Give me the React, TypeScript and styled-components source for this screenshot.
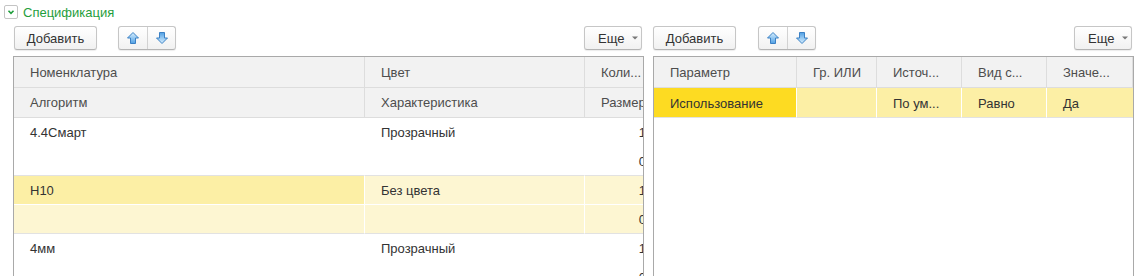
import React from 'react';
import styled, { createGlobalStyle } from 'styled-components';

const Global = createGlobalStyle`
  html, body { margin: 0; padding: 0; background: #fff; }
  body {
    font-family: Arial, "Liberation Sans", sans-serif;
    font-size: 13px;
    color: #333;
  }
  * { box-sizing: border-box; }
`;

const Page = styled.div`
  width: 1140px;
  height: 276px;
  overflow: hidden;
  padding-left: 4px;
`;

const GroupHeader = styled.div`
  display: flex;
  align-items: center;
  gap: 5px;
  height: 24px;
  margin-bottom: 2px;
`;

const CollapseBox = styled.div`
  width: 14px;
  height: 14px;
  border: 1px solid #c4c4c4;
  border-radius: 2px;
  display: flex;
  align-items: center;
  justify-content: center;
  background: #fff;
`;

const Title = styled.span`
  color: #1f9e3c;
  font-size: 13px;
`;

const Columns = styled.div`
  display: flex;
  gap: 9px;
  margin-left: 9px;
`;

const Panel = styled.div<{ $w: number }>`
  width: ${(p) => p.$w}px;
  display: flex;
  flex-direction: column;
  gap: 6px;
`;

const Toolbar = styled.div`
  display: flex;
  align-items: center;
  height: 24px;
`;

const Button = styled.button<{ $ml?: number; $mr?: number; $w?: number; $start?: boolean }>`
  height: 24px;
  ${(p) => (p.$w ? `width: ${p.$w}px;` : '')}
  margin-left: ${(p) => p.$ml ?? 0}px;
  margin-right: ${(p) => p.$mr ?? 0}px;
  padding: ${(p) => (p.$start ? '0 0 0 13px' : '0 12px')};
  border: 1px solid #c6c6c6;
  border-bottom-color: #b4b4b4;
  border-radius: 3px;
  background: linear-gradient(#ffffff, #f1f1f1);
  box-shadow: 0 1px 1px rgba(0, 0, 0, 0.08);
  font-family: Arial, "Liberation Sans", sans-serif;
  font-size: 13px;
  color: #333;
  display: flex;
  align-items: center;
  justify-content: ${(p) => (p.$start ? 'flex-start' : 'center')};
  gap: 8px;
  white-space: nowrap;
`;

const Spacer = styled.div`
  flex: 1;
`;

const Group = styled.div<{ $ml: number }>`
  display: flex;
  height: 24px;
  margin-left: ${(p) => p.$ml}px;
  border: 1px solid #c6c6c6;
  border-bottom-color: #b4b4b4;
  border-radius: 3px;
  background: linear-gradient(#ffffff, #f1f1f1);
  box-shadow: 0 1px 1px rgba(0, 0, 0, 0.08);
  overflow: hidden;
`;

const GroupItem = styled.div<{ $divider?: boolean }>`
  width: 28px;
  height: 22px;
  display: flex;
  align-items: center;
  justify-content: center;
  ${(p) => (p.$divider ? 'border-left: 1px solid #d2d2d2;' : '')}
`;

const Table = styled.div`
  height: 230px;
  border: 1px solid #a9a9a9;
  border-bottom: none;
  overflow: hidden;
  background: #fff;
`;

const Row = styled.div<{ $cols: string }>`
  display: grid;
  grid-template-columns: ${(p) => p.$cols};
  width: max-content;
`;

const HeadCell = styled.div<{ $h: number }>`
  height: ${(p) => p.$h}px;
  background: #f2f2f2;
  border-right: 1px solid #dddddd;
  border-bottom: 1px solid #dddddd;
  padding: 0 8px 0 16px;
  display: flex;
  align-items: center;
  color: #4d4d4d;
  white-space: nowrap;
  overflow: hidden;
`;

type Tone = 'none' | 'focus' | 'current' | 'strong';

const toneBg: Record<Tone, string> = {
  none: '#ffffff',
  focus: '#fcefa5',
  current: '#fdf6d2',
  strong: '#fddb22',
};

const Cell = styled.div<{ $tone: Tone; $h: number; $right?: boolean; $sep?: string; $vline?: boolean }>`
  height: ${(p) => p.$h}px;
  background: ${(p) => toneBg[p.$tone]};
  border-bottom: 1px solid ${(p) => p.$sep ?? 'transparent'};
  border-right: 1px solid ${(p) => (p.$vline ? '#ffffff' : 'transparent')};
  padding: 1px 8px 0 16px;
  display: flex;
  align-items: center;
  justify-content: ${(p) => (p.$right ? 'flex-end' : 'flex-start')};
  color: #333;
  white-space: nowrap;
  overflow: hidden;
`;

const IconSvg = styled.svg`
  flex-shrink: 0;
  display: block;
`;

const ArrowIcon = ({ down }: { down?: boolean }) => (
  <IconSvg width="14" height="14" viewBox="0 0 14 14" style={down ? { transform: 'scaleY(-1)' } : undefined}>
    <defs>
      <linearGradient id={down ? 'gd' : 'gu'} x1="0" y1="0" x2="0" y2="1">
        <stop offset="0" stopColor="#d9f0ff" />
        <stop offset="1" stopColor="#4f9fe3" />
      </linearGradient>
    </defs>
    <path
      d="M7 1.5 L12.5 7 L9.5 7 L9.5 12.5 L4.5 12.5 L4.5 7 L1.5 7 Z"
      fill={`url(#${down ? 'gd' : 'gu'})`}
      stroke="#3b80c4"
      strokeWidth="1"
      strokeLinejoin="round"
    />
  </IconSvg>
);

const Caret = () => (
  <IconSvg width="6" height="4" viewBox="0 0 6 4">
    <path d="M0 0.5 L6 0.5 L3 3.5 Z" fill="#777" />
  </IconSvg>
);

const Chevron = () => (
  <IconSvg width="10" height="10" viewBox="0 0 10 10">
    <path d="M2.5 3.8 L5 6.3 L7.5 3.8" fill="none" stroke="#1f9e3c" strokeWidth="1.6" />
  </IconSvg>
);

const LEFT_COLS = '351px 220px 70px';
const RIGHT_COLS = '143px 80px 85px 85px 86px';

type LeftRow = { name: string; color: string; selected?: boolean };
const leftRows: LeftRow[] = [
  { name: '4.4Смарт', color: 'Прозрачный' },
  { name: 'Н10', color: 'Без цвета', selected: true },
  { name: '4мм', color: 'Прозрачный' },
];

const LeftRowView = ({ r }: { r: LeftRow }) => {
  const sel = !!r.selected;
  const mid = sel ? '#ffffff' : 'transparent';
  return (
    <>
      <Row $cols={LEFT_COLS}>
        <Cell $h={29} $tone={sel ? 'focus' : 'none'} $sep={mid} $vline={sel}>{r.name}</Cell>
        <Cell $h={29} $tone={sel ? 'current' : 'none'} $sep={mid} $vline={sel}>{r.color}</Cell>
        <Cell $h={29} $tone={sel ? 'current' : 'none'} $sep={mid} $right>1</Cell>
      </Row>
      <Row $cols={LEFT_COLS}>
        <Cell $h={29} $tone={sel ? 'current' : 'none'} $sep="#e2e2e2" $vline={sel}></Cell>
        <Cell $h={29} $tone={sel ? 'current' : 'none'} $sep="#e2e2e2" $vline={sel}></Cell>
        <Cell $h={29} $tone={sel ? 'current' : 'none'} $sep="#e2e2e2" $right>0</Cell>
      </Row>
    </>
  );
};

const PanelToolbar = ({ addMl, groupMl }: { addMl: number; groupMl: number }) => (
  <Toolbar>
    <Button $ml={addMl} $w={83}>Добавить</Button>
    <Group $ml={groupMl}>
      <GroupItem><ArrowIcon /></GroupItem>
      <GroupItem $divider><ArrowIcon down /></GroupItem>
    </Group>
    <Spacer />
    <Button $w={58} $mr={2} $start>
      <span>Еще</span>
      <Caret />
    </Button>
  </Toolbar>
);

export default function App() {
  return (
    <Page>
      <Global />
      <GroupHeader>
        <CollapseBox><Chevron /></CollapseBox>
        <Title>Спецификация</Title>
      </GroupHeader>
      <Columns>
        <Panel $w={631}>
          <PanelToolbar addMl={1} groupMl={21} />
          <Table>
            <Row $cols={LEFT_COLS}>
              <HeadCell $h={31}>Номенклатура</HeadCell>
              <HeadCell $h={31}>Цвет</HeadCell>
              <HeadCell $h={31}>Коли...</HeadCell>
            </Row>
            <Row $cols={LEFT_COLS}>
              <HeadCell $h={30}>Алгоритм</HeadCell>
              <HeadCell $h={30}>Характеристика</HeadCell>
              <HeadCell $h={30}>Размер</HeadCell>
            </Row>
            {leftRows.map((r) => (
              <LeftRowView key={r.name} r={r} />
            ))}
          </Table>
        </Panel>
        <Panel $w={481}>
          <PanelToolbar addMl={0} groupMl={22} />
          <Table>
            <Row $cols={RIGHT_COLS}>
              <HeadCell $h={31}>Параметр</HeadCell>
              <HeadCell $h={31}>Гр. ИЛИ</HeadCell>
              <HeadCell $h={31}>Источ...</HeadCell>
              <HeadCell $h={31}>Вид с...</HeadCell>
              <HeadCell $h={31}>Значе...</HeadCell>
            </Row>
            <Row $cols={RIGHT_COLS}>
              <Cell $h={30} $tone="strong" $sep="#e2e2e2" $vline>Использование</Cell>
              <Cell $h={30} $tone="focus" $sep="#e2e2e2" $vline></Cell>
              <Cell $h={30} $tone="focus" $sep="#e2e2e2" $vline>По ум...</Cell>
              <Cell $h={30} $tone="focus" $sep="#e2e2e2" $vline>Равно</Cell>
              <Cell $h={30} $tone="focus" $sep="#e2e2e2">Да</Cell>
            </Row>
          </Table>
        </Panel>
      </Columns>
    </Page>
  );
}
